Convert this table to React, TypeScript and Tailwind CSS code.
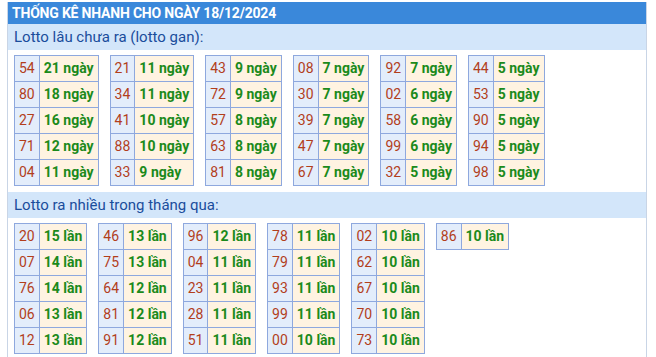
const ganColumns: [string, string][][] = [
  [["54", "21"], ["80", "18"], ["27", "16"], ["71", "12"], ["04", "11"]],
  [["21", "11"], ["34", "11"], ["41", "10"], ["88", "10"], ["33", "9"]],
  [["43", "9"], ["72", "9"], ["57", "8"], ["63", "8"], ["81", "8"]],
  [["08", "7"], ["30", "7"], ["39", "7"], ["47", "7"], ["67", "7"]],
  [["92", "7"], ["02", "6"], ["58", "6"], ["99", "6"], ["32", "5"]],
  [["44", "5"], ["53", "5"], ["90", "5"], ["94", "5"], ["98", "5"]],
];

const hotColumns: [string, string][][] = [
  [["20", "15"], ["07", "14"], ["76", "14"], ["06", "13"], ["12", "13"]],
  [["46", "13"], ["75", "13"], ["64", "12"], ["81", "12"], ["91", "12"]],
  [["96", "12"], ["04", "11"], ["23", "11"], ["28", "11"], ["51", "11"]],
  [["78", "11"], ["79", "11"], ["93", "11"], ["99", "11"], ["00", "10"]],
  [["02", "10"], ["62", "10"], ["67", "10"], ["70", "10"], ["73", "10"]],
  [["86", "10"]],
];

function StatTable({ rows, unit }: { rows: [string, string][]; unit: string }) {
  return (
    <table className="border-collapse self-start">
      <tbody>
        {rows.map(([num, count]) => (
          <tr key={num} className="h-[26px]">
            <td className="border border-[#8ea8de] bg-[#e3edfb] px-[4px] text-center text-[14px] text-[#b23e1c]">
              {num}
            </td>
            <td className="border border-[#8ea8de] bg-[#fff3e1] px-[4px] text-[14px] font-bold text-[#1b8a1b] whitespace-nowrap">
              {count} {unit}
            </td>
          </tr>
        ))}
      </tbody>
    </table>
  );
}

function Section({ title, columns, unit }: { title: string; columns: [string, string][][]; unit: string }) {
  return (
    <div>
      <div className="h-[26px] flex items-center bg-[#d3e6fa] pl-[6px] text-[15px] text-[#1a4d9c]">
        {title}
      </div>
      <div className="flex gap-[11px] pl-[6px] pt-[5px] pb-[6px]">
        {columns.map((rows, i) => (
          <StatTable key={i} rows={rows} unit={unit} />
        ))}
      </div>
    </div>
  );
}

export default function App() {
  return (
    <div className="min-h-[357px] bg-white pt-[2px] pl-[7px] font-['Roboto','Liberation_Sans',Arial,sans-serif]">
      <div className="w-[640px] min-h-[355px] border-x border-[#c9d5e6]">
        <div className="h-[22px] flex items-center bg-[#3a88da] pl-[4px] text-[14px] font-bold tracking-[-0.2px] text-white">
          THỐNG KÊ NHANH CHO NGÀY 18/12/2024
        </div>
        <Section title="Lotto lâu chưa ra (lotto gan):" columns={ganColumns} unit="ngày" />
        <Section title="Lotto ra nhiều trong tháng qua:" columns={hotColumns} unit="lần" />
      </div>
    </div>
  );
}
